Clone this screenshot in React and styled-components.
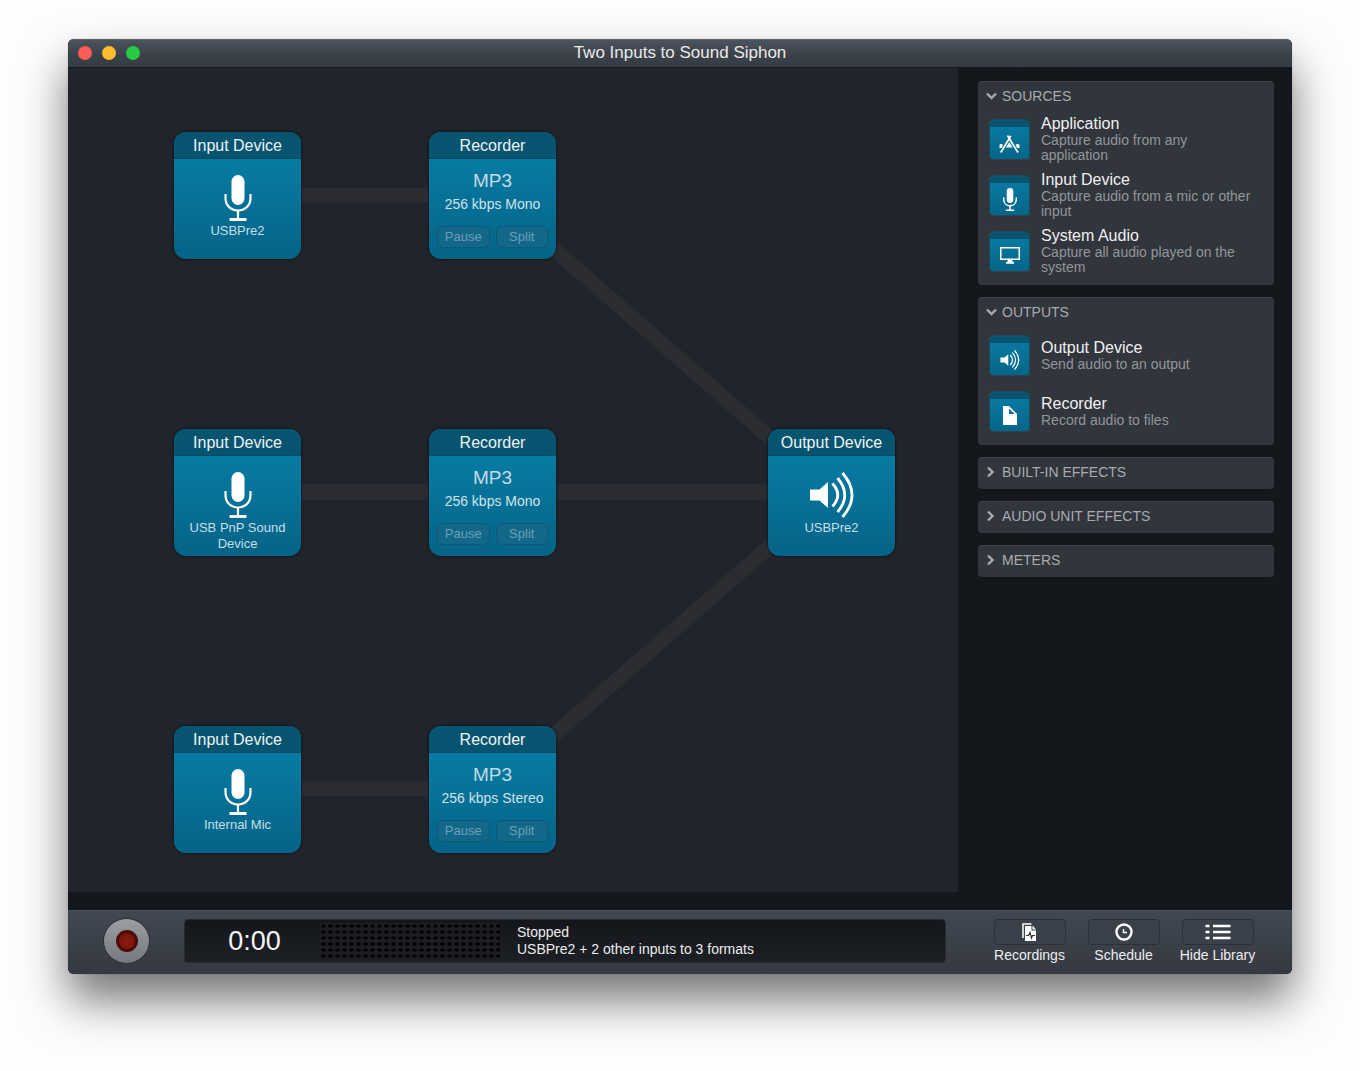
import React, { useState } from "react";
import styled, { createGlobalStyle } from "styled-components";

const GlobalStyle = createGlobalStyle`
  *, *::before, *::after { box-sizing: border-box; }
  body {
    margin: 0;
    background: #fdfdfd;
    font-family: "Liberation Sans", Helvetica, Arial, sans-serif;
    font-size: 14px;
    color: #f1f2f3;
  }
  button { font: inherit; color: inherit; margin: 0; padding: 0; border: 0; background: none; }
  h1, h2, h3, p, ul { margin: 0; padding: 0; font-weight: normal; }
`;

const Page = styled.div`
  display: flex;
  min-height: 100vh;
  padding: 39px 68px 97px;
  overflow: hidden;
`;

const Window = styled.main`
  flex: 1;
  display: flex;
  flex-direction: column;
  min-width: 0;
  border-radius: 6px;
  overflow: hidden;
  background: #14171b;
  box-shadow: 0 0 1px rgba(0, 0, 0, 0.5), 0 26px 46px rgba(0, 0, 0, 0.54);
`;

const TitleBar = styled.header`
  display: grid;
  grid-template-columns: 1fr auto 1fr;
  align-items: center;
  height: 29px;
  padding: 0 10px 2px;
  background: linear-gradient(#4b535c, #3a4048 60%, #363c44);
  border-top: 1px solid #5a626b;
  border-bottom: 1px solid #17191d;
`;

const Lights = styled.div`
  display: flex;
  gap: 10px;
`;

const Light = styled.button`
  width: 14px;
  height: 14px;
  border-radius: 50%;
  background: ${(p) => p.$color};
`;

const Title = styled.h1`
  font-size: 17px;
  line-height: 20px;
  color: #e9eaeb;
`;

const Body = styled.div`
  flex: 1;
  display: flex;
  min-height: 0;
`;

const Canvas = styled.section`
  position: relative;
  flex: 1;
  margin-bottom: 18px;
  background: #21242b;
`;

const Beams = styled.svg`
  position: absolute;
  inset: 0;
  width: 100%;
  height: 100%;
`;

const Node = styled.article`
  position: absolute;
  left: ${(p) => p.$x}px;
  top: ${(p) => p.$y}px;
  display: flex;
  flex-direction: column;
  width: 127px;
  height: 127px;
  border-radius: 12px;
  overflow: hidden;
  text-align: center;
  background: linear-gradient(#077ba4, #077aa2 25%, #056386);
  box-shadow: 0 0 2px 1px rgba(14, 20, 26, 0.7);
`;

const NodeTitle = styled.h2`
  height: 27px;
  font-size: 16px;
  line-height: 27px;
  background: #06546f;
  border-bottom: 1px solid #054a63;
  color: #eef3f5;
`;

const DeviceBody = styled.div`
  display: flex;
  flex-direction: column;
  align-items: center;
  gap: 2px;
  padding: 16px 8px 0;
`;

const DeviceName = styled.p`
  font-size: 13px;
  line-height: 16px;
  color: #c6dfe8;
`;

const FormatBody = styled.div`
  flex: 1;
  display: flex;
  flex-direction: column;
  padding: 10px 8px;
`;

const Format = styled.p`
  font-size: 19px;
  line-height: 24px;
  color: #c3dbe4;
`;

const Bitrate = styled.p`
  font-size: 14px;
  line-height: 22px;
  color: #cfe3ea;
`;

const NodeActions = styled.div`
  display: flex;
  gap: 6px;
  margin-top: 11px;
`;

const NodeButton = styled.button`
  flex: 1;
  height: 22px;
  font-size: 13px;
  line-height: 20px;
  border: 1px solid #0a5a78;
  border-radius: 6px;
  background: #13688a;
  color: #6c9fb4;
`;

const Library = styled.aside`
  flex: none;
  display: flex;
  flex-direction: column;
  gap: 12px;
  width: 334px;
  padding: 13px 18px 13px 20px;
`;

const Group = styled.section`
  padding-bottom: 3px;
  border-radius: 4px;
  background: #31353c;
  border-top: 1px solid #3d4249;
`;

const GroupToggle = styled.button`
  display: flex;
  align-items: center;
  gap: 4px;
  width: 100%;
  height: 28px;
  padding: 0 8px;
  font-size: 14px;
  color: #a8abaf;
`;

const Items = styled.ul`
  list-style: none;
  padding: 1px 20px 3px 11px;
`;

const Item = styled.li`
  display: flex;
  align-items: center;
  gap: 11px;
  height: 56px;
`;

const Tile = styled.span`
  flex: none;
  display: grid;
  place-items: center;
  width: 41px;
  height: 41px;
  padding-top: 9px;
  border-radius: 4px;
  border: 1px solid #23475a;
  background: linear-gradient(#06546f 7px, #0879a1 7px, #056588);
`;

const ItemTitle = styled.h3`
  font-size: 16px;
  line-height: 18px;
  color: #f0f0f1;
`;

const ItemText = styled.p`
  font-size: 14px;
  line-height: 15px;
  color: #92959a;
`;

const Footer = styled.footer`
  flex: none;
  display: flex;
  align-items: flex-start;
  height: 64px;
  padding: 8px 29px 0 36px;
  background: linear-gradient(#414851, #343841);
  border-top: 1px solid #4a5159;
`;

const RecordButton = styled.button`
  display: grid;
  place-items: center;
  width: 45px;
  height: 44px;
  border-radius: 50%;
  background: linear-gradient(#9b9ea2, #74797f);
  box-shadow: 0 0 0 1px #2d3138;
`;

const RecordDot = styled.span`
  width: 22px;
  height: 22px;
  border-radius: 50%;
  border: 3px solid #4d0c07;
  background: radial-gradient(circle at 50% 60%, #8d1c0d, #7a1409 60%, #5b0f08);
`;

const Display = styled.section`
  flex: 1;
  display: flex;
  align-items: center;
  height: 44px;
  margin: 0 38px 0 35px;
  border-radius: 4px;
  background: linear-gradient(#14161b, #1c1f23);
  border: 1px solid #262a31;
`;

const Clock = styled.time`
  width: 135px;
  padding-left: 4px;
  text-align: center;
  font-size: 27px;
  line-height: 32px;
  color: #f4f4f5;
`;

const Meter = styled.div`
  width: 180px;
  height: 36px;
  background: #1d1e22 radial-gradient(ellipse 3px 2px at center, #050507 70%, transparent) 0 0 / 7px 6px;
`;

const Status = styled.div`
  margin-left: 17px;
  font-size: 14px;
  line-height: 17px;
  color: #ececee;
`;

const Tools = styled.nav`
  display: flex;
  gap: 3px;
`;

const Tool = styled.button`
  display: flex;
  flex-direction: column;
  align-items: center;
  width: 91px;
  font-size: 14px;
  line-height: 20px;
  color: #eceef0;
`;

const ToolFace = styled.span`
  display: grid;
  place-items: center;
  width: 72px;
  height: 26px;
  border: 1px solid #2b2f37;
  border-radius: 4px;
  background: #3b414a;
`;

function MicIcon({ size = 46 }) {
  return (
    <svg width={Math.round((size * 28) / 46)} height={size} viewBox="0 0 28 46" fill="none" stroke="#fff" strokeWidth={size < 30 ? 3 : 2.2}>
      <rect x="7.500" y="0" width="13" height="30" rx="6.500" fill="#fff" stroke="none" />
      <path d="M1.500 19v4c0 7.500 5.300 12.500 12.500 12.500S26.500 30.500 26.500 23v-4" />
      <path d="M14 35.500V44" />
      <path d="M5.500 44.500h17" strokeWidth="2.800" />
    </svg>
  );
}

function SpeakerIcon({ size = 46 }) {
  return (
    <svg width={size} height={size} viewBox="0 0 46 46" fill="none" stroke="#fff" strokeWidth="2.800">
      <path d="M1 17.500h9.500L19 10v26l-8.500-7.500H1z" fill="#fff" stroke="none" />
      <path d="M23.500 11.500q10.500 11.500 0 23" />
      <path d="M28.500 6q14.500 17 0 34" />
      <path d="M33.500 1q19 22 0 44" />
    </svg>
  );
}

function AppIcon() {
  return (
    <svg width="21" height="18" viewBox="0 0 21 18" stroke="#fff" fill="none" strokeWidth="1.700">
      <path d="M8.500 0.500L19 17.500M11.800 1L1.800 17.500" />
      <path d="M10.300 7l3.200 5.500H7z" fill="#fff" stroke="none" />
      <path d="M0.500 13V9.800Q2 8.500 3.800 9.500L3 13zM20.500 13V9.800Q19 8.500 16.700 9.500L18 13z" fill="#fff" stroke="none" />
    </svg>
  );
}

function MonitorIcon() {
  return (
    <svg width="20" height="17" viewBox="0 0 20 17" fill="none" stroke="#fff">
      <rect x="0.750" y="0.750" width="18.500" height="11.500" strokeWidth="1.500" />
      <path d="M7.500 12.500h5V15H14v1.700H6V15h1.500z" fill="#fff" stroke="none" />
    </svg>
  );
}

function FileIcon() {
  return (
    <svg width="14" height="19" viewBox="0 0 14 19" fill="#fff">
      <path d="M0 0h6v8h8v11H0z" />
      <path d="M6 0L14 8H11.500L6 2.500z" />
    </svg>
  );
}

function Chevron({ open }) {
  return (
    <svg width="12" height="12" viewBox="0 0 12 12" fill="none" stroke="#a8abaf" strokeWidth="2.400">
      <path d={open ? "M1 3.500l4.500 4.500L10 3.500" : "M2 1.500L6.500 6 2 10.500"} />
    </svg>
  );
}

function RecordingsIcon() {
  return (
    <svg width="15" height="18" viewBox="0 0 15 18" fill="#fff">
      <path d="M1 15V1h8.500" fill="none" stroke="#fff" strokeWidth="1.500" />
      <path d="M3 3h6.500v4.500H14V18H3z" />
      <path d="M10.500 2.500L14 6.500h-3.500z" />
      <path d="M4 12.500h2.500l1.500-3 1.500 5.500 1-2.500H13" fill="none" stroke="#30353d" strokeWidth="1.200" />
    </svg>
  );
}

function ClockIcon() {
  return (
    <svg width="18" height="18" viewBox="0 0 18 18" fill="none" stroke="#fff">
      <circle cx="9" cy="9" r="7.500" strokeWidth="2.400" />
      <path d="M8.500 6v3.500H12" strokeWidth="1.500" />
    </svg>
  );
}

function ListIcon() {
  return (
    <svg width="26" height="16" viewBox="0 0 26 16" stroke="#fff" strokeWidth="2.600">
      <path d="M0.500 2h4M0.500 8h4M0.500 14h4M8 2h17.500M8 8h17.500M8 14h17.500" />
    </svg>
  );
}

const beams = [
  [170, 127, 424, 127],
  [170, 424, 424, 424],
  [170, 721, 424, 721],
  [424, 127, 764, 424],
  [424, 424, 764, 424],
  [424, 721, 764, 424],
];

const devices = [
  { x: 106, y: 64, title: "Input Device", name: "USBPre2", icon: <MicIcon /> },
  { x: 106, y: 361, title: "Input Device", name: "USB PnP Sound Device", icon: <MicIcon /> },
  { x: 106, y: 658, title: "Input Device", name: "Internal Mic", icon: <MicIcon /> },
  { x: 700, y: 361, title: "Output Device", name: "USBPre2", icon: <SpeakerIcon /> },
];

const recorders = [
  { x: 361, y: 64, rate: "256 kbps Mono" },
  { x: 361, y: 361, rate: "256 kbps Mono" },
  { x: 361, y: 658, rate: "256 kbps Stereo" },
];

const groups = [
  {
    title: "SOURCES",
    items: [
      { title: "Application", text: "Capture audio from any application", icon: <AppIcon /> },
      { title: "Input Device", text: "Capture audio from a mic or other input", icon: <MicIcon size={23} /> },
      { title: "System Audio", text: "Capture all audio played on the system", icon: <MonitorIcon /> },
    ],
  },
  {
    title: "OUTPUTS",
    items: [
      { title: "Output Device", text: "Send audio to an output", icon: <SpeakerIcon size={20} /> },
      { title: "Recorder", text: "Record audio to files", icon: <FileIcon /> },
    ],
  },
  { title: "BUILT-IN EFFECTS", items: [] },
  { title: "AUDIO UNIT EFFECTS", items: [] },
  { title: "METERS", items: [] },
];

function LibraryGroup({ title, items }) {
  const [open, setOpen] = useState(items.length > 0);
  return (
    <Group>
      <GroupToggle aria-expanded={open} onClick={() => setOpen(!open)}>
        <Chevron open={open} />
        {title}
      </GroupToggle>
      {open && items.length > 0 && (
        <Items>
          {items.map((item) => (
            <Item key={item.title}>
              <Tile>{item.icon}</Tile>
              <div>
                <ItemTitle>{item.title}</ItemTitle>
                <ItemText>{item.text}</ItemText>
              </div>
            </Item>
          ))}
        </Items>
      )}
    </Group>
  );
}

export default function App() {
  return (
    <Page>
      <GlobalStyle />
      <Window>
        <TitleBar>
          <Lights>
            <Light $color="#fc5b57" aria-label="Close" />
            <Light $color="#fdbc2e" aria-label="Minimize" />
            <Light $color="#28ca41" aria-label="Zoom" />
          </Lights>
          <Title>Two Inputs to Sound Siphon</Title>
        </TitleBar>
        <Body>
          <Canvas>
            <Beams stroke="#2b2d32" strokeWidth="15">
              {beams.map(([x1, y1, x2, y2]) => (
                <line key={`${x1}-${y1}-${x2}`} x1={x1} y1={y1} x2={x2} y2={y2} />
              ))}
            </Beams>
            {devices.map((d) => (
              <Node key={`${d.x}-${d.y}`} $x={d.x} $y={d.y}>
                <NodeTitle>{d.title}</NodeTitle>
                <DeviceBody>
                  {d.icon}
                  <DeviceName>{d.name}</DeviceName>
                </DeviceBody>
              </Node>
            ))}
            {recorders.map((r) => (
              <Node key={r.y} $x={r.x} $y={r.y}>
                <NodeTitle>Recorder</NodeTitle>
                <FormatBody>
                  <Format>MP3</Format>
                  <Bitrate>{r.rate}</Bitrate>
                  <NodeActions>
                    <NodeButton disabled>Pause</NodeButton>
                    <NodeButton disabled>Split</NodeButton>
                  </NodeActions>
                </FormatBody>
              </Node>
            ))}
          </Canvas>
          <Library>
            {groups.map((g) => (
              <LibraryGroup key={g.title} {...g} />
            ))}
          </Library>
        </Body>
        <Footer>
          <RecordButton aria-label="Record">
            <RecordDot />
          </RecordButton>
          <Display>
            <Clock>0:00</Clock>
            <Meter />
            <Status>
              <p>Stopped</p>
              <p>USBPre2 + 2 other inputs to 3 formats</p>
            </Status>
          </Display>
          <Tools>
            <Tool>
              <ToolFace><RecordingsIcon /></ToolFace>
              Recordings
            </Tool>
            <Tool>
              <ToolFace><ClockIcon /></ToolFace>
              Schedule
            </Tool>
            <Tool>
              <ToolFace><ListIcon /></ToolFace>
              Hide Library
            </Tool>
          </Tools>
        </Footer>
      </Window>
    </Page>
  );
}
